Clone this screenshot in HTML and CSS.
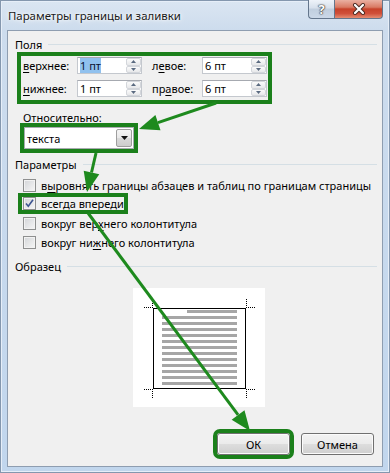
FILE: index.html
```html
<!DOCTYPE html>
<html lang="ru">
<head>
<meta charset="utf-8">
<title>Параметры границы и заливки</title>
<link rel="stylesheet" href="styles.css">
</head>
<body>
<div class="window">
  <div class="titlebar">
    <span class="title">Параметры границы и заливки</span>
    <div class="caption">
      <span class="cbtn help">?</span>
      <span class="cbtn close">
        <svg width="14" height="12" viewBox="0 0 14 12">
          <path d="M3 2 L11 10 M11 2 L3 10" stroke="#4a2a22" stroke-width="4" stroke-linecap="round"/>
          <path d="M3 2 L11 10 M11 2 L3 10" stroke="#ffffff" stroke-width="2.2" stroke-linecap="round"/>
        </svg>
      </span>
    </div>
  </div>

  <div class="client">
    <div class="ghead"><span>Поля</span><i></i></div>

    <div class="fields">
      <label><u>в</u>ерхнее:</label>
      <div class="spin"><span class="v"><span class="sel">1 пт</span></span><span class="arrows"><b><svg width="5" height="3" viewBox="0 0 5 3"><path d="M0 3 L2.5 0 L5 3Z" fill="#5a6a80"/></svg></b><b><svg width="5" height="3" viewBox="0 0 5 3"><path d="M0 0 L2.5 3 L5 0Z" fill="#5a6a80"/></svg></b></span></div>
      <label class="l2">л<u>е</u>вое:</label>
      <div class="spin"><span class="v">6 пт</span><span class="arrows"><b><svg width="5" height="3" viewBox="0 0 5 3"><path d="M0 3 L2.5 0 L5 3Z" fill="#5a6a80"/></svg></b><b><svg width="5" height="3" viewBox="0 0 5 3"><path d="M0 0 L2.5 3 L5 0Z" fill="#5a6a80"/></svg></b></span></div>
      <label><u>н</u>ижнее:</label>
      <div class="spin"><span class="v">1 пт</span><span class="arrows"><b><svg width="5" height="3" viewBox="0 0 5 3"><path d="M0 3 L2.5 0 L5 3Z" fill="#5a6a80"/></svg></b><b><svg width="5" height="3" viewBox="0 0 5 3"><path d="M0 0 L2.5 3 L5 0Z" fill="#5a6a80"/></svg></b></span></div>
      <label class="l2">пр<u>а</u>вое:</label>
      <div class="spin"><span class="v">6 пт</span><span class="arrows"><b><svg width="5" height="3" viewBox="0 0 5 3"><path d="M0 3 L2.5 0 L5 3Z" fill="#5a6a80"/></svg></b><b><svg width="5" height="3" viewBox="0 0 5 3"><path d="M0 0 L2.5 3 L5 0Z" fill="#5a6a80"/></svg></b></span></div>
    </div>

    <div class="rel-label">Относительно:</div>
    <div class="combo">
      <span>текста</span>
      <b class="dd"><svg width="7" height="4" viewBox="0 0 7 4"><path d="M0 0 L7 0 L3.5 4Z" fill="#111"/></svg></b>
    </div>

    <div class="ghead g2"><span>Параметры</span><i></i></div>
    <div class="checks">
      <div class="row"><span class="cb"></span><span>в<u>ы</u>ровнять границы абзацев и таблиц по границам страницы</span></div>
      <div class="row"><span class="hl"><span class="cb"><svg width="11" height="11" viewBox="0 0 11 11"><path d="M2 5.5 L4.3 8.3 L9 1.8" fill="none" stroke="#3d5590" stroke-width="1.6"/></svg></span><span>в<u>с</u>егда впереди</span></span></div>
      <div class="row"><span class="cb"></span><span>вокруг вер<u>х</u>него колонтитула</span></div>
      <div class="row"><span class="cb"></span><span>вокруг ни<u>ж</u>него колонтитула</span></div>
    </div>

    <div class="ghead g3"><span>Образец</span><i></i></div>
    <div class="preview">
      <svg width="132" height="119" viewBox="0 0 132 119" shape-rendering="crispEdges">
        <rect x="20.5" y="20.5" width="92" height="80" fill="#fff" stroke="#000" stroke-width="1"/>
        <g fill="#a6a6a6">
          <rect x="54" y="22" width="50" height="3"/>
          <rect x="29" y="28" width="75" height="3"/>
          <rect x="29" y="34" width="75" height="3"/>
          <rect x="29" y="40" width="75" height="3"/>
          <rect x="29" y="46" width="75" height="3"/>
          <rect x="29" y="52" width="75" height="3"/>
          <rect x="29" y="58" width="75" height="3"/>
          <rect x="29" y="64" width="75" height="3"/>
          <rect x="29" y="70" width="75" height="3"/>
          <rect x="29" y="76" width="75" height="3"/>
          <rect x="29" y="82" width="75" height="3"/>
          <rect x="29" y="88" width="75" height="3"/>
          <rect x="29" y="94" width="75" height="3"/>
        </g>
        <g stroke="#000" stroke-width="1" stroke-dasharray="1 1" fill="none">
          <path d="M11 19.5 H20 M19.5 11 V20"/>
          <path d="M113 19.5 H122 M113.5 11 V20"/>
          <path d="M11 101.5 H20 M19.5 101 V110"/>
          <path d="M113 101.5 H122 M113.5 101 V110"/>
        </g>
      </svg>
    </div>

    <div class="buttons">
      <span class="btn ok">ОК</span>
      <span class="btn">Отмена</span>
    </div>
  </div>

  <svg class="overlay" width="390" height="473" viewBox="0 0 390 473">
    <g stroke="#1e8a1e" stroke-width="3" fill="none" stroke-linecap="butt">
      <path d="M216 103 L157.95 122.6"/>
      <path d="M96 153 L91.5 172.5"/>
      <path d="M88 213 L238.07 414.95"/>
    </g>
    <g fill="#1e8a1e">
      <polygon points="139,129 155.39,115.02 160.51,130.18"/>
      <polygon points="87,192 83.7,170.71 99.3,174.31"/>
      <polygon points="250,431 231.65,419.72 244.49,410.18"/>
    </g>
  </svg>
</div>
</body>
</html>
```
FILE: styles.css
```css
* { box-sizing: border-box; }
html, body { margin: 0; padding: 0; }
body {
  width: 390px;
  height: 473px;
  overflow: hidden;
  font-family: "Noto Sans", "Open Sans", "DejaVu Sans", sans-serif;
  font-size: 11px;
  color: #000;
  background: #c0d5ec;
}
u { text-decoration: underline; text-underline-offset: 2px; }

.window {
  position: relative;
  width: 390px;
  height: 473px;
  background: linear-gradient(180deg, #dbe6f2 0px, #cddced 30px, #c1d6ed 100%);
  box-shadow: inset 0 0 0 1px #8497ae, inset 0 0 0 2px #e6eef8;
  overflow: hidden;
}

.titlebar {
  height: 30px;
  display: flex;
  align-items: center;
  padding-left: 8px;
}
.title {
  color: #1a1a1a;
  font-size: 11.4px;
  white-space: nowrap;
  text-shadow: 0 0 6px #fff, 0 0 3px #fff;
}
.caption {
  margin-left: auto;
  margin-right: 7px;
  align-self: flex-start;
  display: flex;
}
.cbtn {
  height: 19px;
  display: flex;
  align-items: center;
  justify-content: center;
  border: 1px solid #64768c;
  border-top: 0;
}
.help {
  width: 26px;
  border-right: 0;
  border-radius: 0 0 0 4px;
  background: linear-gradient(#eef3f9, #d6e0ec 45%, #c0cede 50%, #cbd8e8);
  color: #fff;
  font-weight: bold;
  font-size: 13px;
  text-shadow: 0 0 1px #333, 0 0 1px #333, 0 0 2px #333;
}
.close {
  width: 49px;
  border-radius: 0 0 4px 0;
  background: linear-gradient(#eab0a2, #d97a64 40%, #c7422a 50%, #d0503a 75%, #e58d72);
}

.client {
  margin-left: 7px;
  width: 376px;
  height: 437px;
  border: 1px solid #8e9db0;
  background: #f0f0f0;
  padding-top: 6px;
}

.ghead {
  display: flex;
  align-items: center;
  height: 15px;
  line-height: 15px;
  padding-left: 7px;
  padding-right: 5px;
  white-space: nowrap;
}
.ghead i {
  flex: 1;
  height: 0;
  border-top: 1px solid #d5dfe5;
  margin-left: 6px;
}
.g2 { margin-top: 8px; }
.g3 { margin-top: 7px; }

.fields {
  margin: 4px 0 0 13px;
  width: 247px;
  display: grid;
  grid-template-columns: 54px 65px 60px 65px;
  grid-auto-rows: 17px;
  row-gap: 6px;
  padding: 1px 1px 3px 2px;
  outline: 4px solid #1b801b;
  white-space: nowrap;
}
.fields label { line-height: 17px; }
.fields .l2 { padding-left: 10px; }

.spin {
  display: flex;
  background: #fff;
  border: 1px solid #c4c8ce;
  border-top-color: #a6a9b0;
}
.spin .v {
  flex: 1;
  padding-left: 2px;
  line-height: 15px;
}
.spin .sel { background: #90c1ee; color: #0a1030; }
.spin .arrows {
  width: 15px;
  display: flex;
  flex-direction: column;
}
.spin .arrows b {
  flex: 1;
  display: flex;
  align-items: center;
  justify-content: center;
  border: 1px solid #d3d6db;
  border-radius: 2px;
  background: linear-gradient(#fbfbfb, #e7e8ea);
}
.spin .arrows svg { display: block; }

.rel-label {
  margin: 12px 0 0 15px;
  height: 12px;
  line-height: 12px;
}
.combo {
  margin: 3px 0 0 16px;
  width: 110px;
  height: 22px;
  border: 1px solid #a9abb0;
  background: #fff;
  display: flex;
  align-items: center;
  padding-left: 2px;
  outline: 4px solid #1b801b;
}
.combo span { flex: 1; }
.combo .dd {
  width: 16px;
  height: 18px;
  margin-right: 1px;
  border: 1px solid #9e9e9e;
  border-radius: 2px;
  background: linear-gradient(#f4f4f4, #e8e8e8 50%, #d9d9d9 50%, #cdcdcd);
  display: flex;
  align-items: center;
  justify-content: center;
}
.combo .dd svg { display: block; }

.checks { margin-top: 4px; }
.row {
  height: 19px;
  display: flex;
  align-items: center;
  padding-left: 15px;
  white-space: nowrap;
}
.cb {
  width: 13px;
  height: 13px;
  flex: none;
  margin-right: 5px;
  border: 1px solid #8e8f8f;
  background: linear-gradient(135deg, #d3d5d8, #f6f6f6);
  box-shadow: inset 0 0 0 1px #f2f2f2;
  display: flex;
  align-items: center;
  justify-content: center;
}
.cb svg { display: block; }
.hl {
  display: flex;
  align-items: center;
  width: 102px;
  height: 13px;
  margin-left: -1px;
  margin-top: -2px;
  padding-left: 1px;
  outline: 4px solid #1b801b;
}

.preview {
  margin: 14px 0 0 125px;
  width: 132px;
  height: 119px;
  background: #fff;
}
.preview svg { display: block; }

.buttons {
  display: flex;
  justify-content: flex-end;
  gap: 11px;
  padding-right: 8px;
  margin-top: 26px;
}
.btn {
  width: 73px;
  height: 22px;
  display: flex;
  align-items: center;
  justify-content: center;
  border: 1px solid #707070;
  border-radius: 3px;
  background: linear-gradient(#f3f3f3, #ebebeb 48%, #dddddd 52%, #cfcfcf);
  box-shadow: inset 0 0 0 1px #fbfbfb;
}
.ok { outline: 4px solid #1b801b; }

.overlay {
  position: absolute;
  left: 0;
  top: 0;
  pointer-events: none;
}
```
